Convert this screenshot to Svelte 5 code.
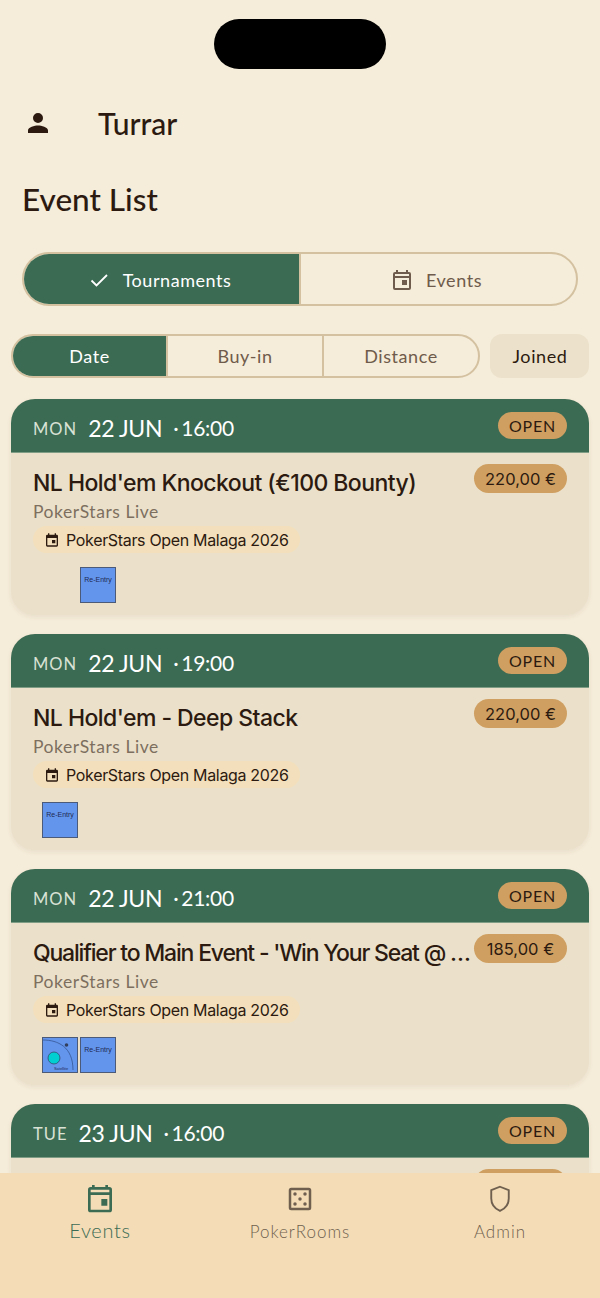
<script>
  const cards = [
    { day: 'MON', date: '22 JUN', time: '16:00', title: "NL Hold'em Knockout (€100 Bounty)", price: '220,00 €', tags: ['spacer', 'reentry'] },
    { day: 'MON', date: '22 JUN', time: '19:00', title: "NL Hold'em - Deep Stack", price: '220,00 €', tags: ['reentry'] },
    { day: 'MON', date: '22 JUN', time: '21:00', title: "Qualifier to Main Event - 'Win Your Seat @ Main Event'", price: '185,00 €', tags: ['satellite', 'reentry'], tight: true },
    { day: 'TUE', date: '23 JUN', time: '16:00', title: "NL Hold'em Freezeout", price: '220,00 €', tags: ['reentry'] }
  ];
</script>

<div class="page">
  <div class="notch"></div>

  <header class="user">
    <svg class="user-icon" viewBox="0 0 24 24" width="30" height="30"><path fill="#2c1a10" d="M12 12a4 4 0 1 0 0-8 4 4 0 0 0 0 8zm0 2c-2.67 0-8 1.34-8 4v2h16v-2c0-2.66-5.33-4-8-4z"/></svg>
    <span class="user-name">Turrar</span>
  </header>

  <h1>Event List</h1>

  <div class="seg seg-main">
    <div class="seg-item active">
      <svg viewBox="0 0 24 24" width="24" height="24"><path fill="none" stroke="#fff" stroke-width="1.8" d="M4.5 12.5l5 5L20 7"/></svg>
      <span>Tournaments</span>
    </div>
    <div class="seg-item">
      <svg viewBox="0 0 24 24" width="24" height="24"><path fill="#6f5b4b" d="M19 4h-1V2h-2v2H8V2H6v2H5a2 2 0 0 0-2 2v14a2 2 0 0 0 2 2h14a2 2 0 0 0 2-2V6a2 2 0 0 0-2-2zm0 16H5V10h14v10zM5 8V6h14v2H5zm7 4h5v5h-5v-5z"/></svg>
      <span>Events</span>
    </div>
  </div>

  <div class="filters">
    <div class="seg seg-sort">
      <div class="seg-item active">Date</div>
      <div class="seg-item">Buy-in</div>
      <div class="seg-item">Distance</div>
    </div>
    <div class="joined">Joined</div>
  </div>

  <div class="list">
    {#each cards as c}
      <article class="card">
        <div class="card-head">
          <span class="day">{c.day}</span>
          <span class="date">{c.date}</span>
          <span class="time"><span class="dot">·</span>{c.time}</span>
          <span class="open">OPEN</span>
        </div>
        <div class="card-body">
          <div class="title-row">
            <div class="title" class:tight={c.tight}>{c.title}</div>
            <div class="price">{c.price}</div>
          </div>
          <div class="venue">PokerStars Live</div>
          <div class="series">
            <svg viewBox="0 0 24 24" width="16" height="16"><path fill="#2c1a10" d="M19 4h-1V2h-2v2H8V2H6v2H5a2 2 0 0 0-2 2v14a2 2 0 0 0 2 2h14a2 2 0 0 0 2-2V6a2 2 0 0 0-2-2zm0 16H5V9h14v11zm-7-8h5v5h-5v-5z"/></svg>
            <span>PokerStars Open Malaga 2026</span>
          </div>
          <div class="tags">
            {#each c.tags as t}
              {#if t === 'spacer'}
                <div class="tag-spacer"></div>
              {:else if t === 'reentry'}
                <div class="tag"><span>Re-Entry</span></div>
              {:else}
                <div class="tag sat">
                  <svg viewBox="0 0 36 36" width="36" height="36">
                    <path d="M1 3C16 3 31 10 31 33" fill="none" stroke="#2f4f86" stroke-width="0.7"/>
                    <circle cx="24.500" cy="8" r="1.800" fill="#333f5c"/>
                    <circle cx="12" cy="21" r="6" fill="#00ced1" stroke="#333f5c" stroke-width="0.7"/>
                    <text x="19" y="32.500" text-anchor="middle" class="sat-text">Satellite</text>
                  </svg>
                </div>
              {/if}
            {/each}
          </div>
        </div>
      </article>
    {/each}
  </div>

  <nav class="bottom">
    <div class="nav-item current">
      <svg viewBox="0 0 24 24" width="32" height="32"><path fill="#3c6b54" d="M19 3h-1V1.500h-2V3H8V1.500H6V3H5a2 2 0 0 0-2 2v15a2 2 0 0 0 2 2h14a2 2 0 0 0 2-2V5a2 2 0 0 0-2-2zm0 17H5V9h14v11zM5 7V5h14v2H5zm8 5h4.500v5H13v-5z"/></svg>
      <span>Events</span>
    </div>
    <div class="nav-item">
      <svg viewBox="0 0 24 24" width="30" height="30"><path fill="#6f5f4e" d="M19 3H5a2 2 0 0 0-2 2v14a2 2 0 0 0 2 2h14a2 2 0 0 0 2-2V5a2 2 0 0 0-2-2zm0 16H5V5h14v14z"/><circle cx="8" cy="8" r="1.400" fill="#6f5f4e"/><circle cx="16" cy="8" r="1.400" fill="#6f5f4e"/><circle cx="12" cy="12" r="1.400" fill="#6f5f4e"/><circle cx="8" cy="16" r="1.400" fill="#6f5f4e"/><circle cx="16" cy="16" r="1.400" fill="#6f5f4e"/></svg>
      <span>PokerRooms</span>
    </div>
    <div class="nav-item">
      <svg viewBox="0 0 24 24" width="30" height="30"><path fill="none" stroke="#6f5f4e" stroke-width="1.500" d="M12 2.200l7 2.800v6.500c0 4.500-3 8.200-7 10-4-1.800-7-5.500-7-10V5z"/></svg>
      <span>Admin</span>
    </div>
  </nav>
</div>

<style>
  :global(body) { margin: 0; background: #f5ecd9; }
  .page {
    position: relative; width: 600px; height: 1298px; overflow: hidden;
    background: #f5ecd9; color: #2c1a10;
    font-family: "Inter", "Liberation Sans", sans-serif;
    padding-top: 99px; box-sizing: border-box;
  }
  .notch { position: absolute; left: 214px; top: 19px; width: 172px; height: 50px; border-radius: 25px; background: #000; }
  .user { display: flex; align-items: center; height: 48px; padding-left: 23px; gap: 45px; }
  .user-icon { flex: none; }
  .user-name { font-size: 30px; line-height: 48px; font-family: "Lato", sans-serif; font-weight: 500; }
  h1 { margin: 0; padding: 28px 0 1px 22px; font-size: 31.500px; line-height: 48px; font-weight: 500; font-family: "Lato", sans-serif; }

  .seg { display: flex; border: 2px solid #d3c1a0; box-sizing: border-box; overflow: hidden; background: #f5ecd9; }
  .seg-item { flex: 1 1 0; box-sizing: border-box; display: flex; align-items: center; justify-content: center; gap: 12px; color: #6f5b4b; font-family: "Lato", sans-serif; font-size: 18px; letter-spacing: 0.550px; }
  .seg-item + .seg-item { border-left: 2px solid #d3c1a0; }
  .seg-item.active { background: #3c6b54; color: #fff; }
  .seg-main { margin: 28px 22px 0 22px; height: 54px; border-radius: 27px; }
  .seg-main .seg-item { padding: 2px 5px 0 0; }
  .seg-main .seg-item.active { flex: 0 0 275px; padding-right: 5px; }
  .filters { display: flex; align-items: center; gap: 10px; margin: 28px 11px 0 11px; }
  .seg-sort { width: 469px; height: 44px; border-radius: 22px; }
  .seg-sort .seg-item.active { flex: 0 0 153px; }
  .joined { flex: 1; height: 44px; border-radius: 12px; background: #ece2cb; display: flex; align-items: center; justify-content: center; font-family: "Lato", sans-serif; font-size: 18px; letter-spacing: 0.600px; color: #2c1a10; padding-left: 1px; }

  .list { display: flex; flex-direction: column; gap: 19px; margin: 21px 11px 0; }
  .card { height: 216px; border-radius: 24px; overflow: hidden; background: #ebe1ca; box-shadow: 0 2px 5px rgba(90, 70, 40, 0.08); flex: none; }
  .card-head { height: 54px; background: #3c6b54; color: #fff; display: flex; align-items: center; padding: 4px 22px 0; box-sizing: border-box; border-bottom: 1px solid #7f9c84; }
  .day { font-family: "Lato", sans-serif; font-size: 16.500px; letter-spacing: 1px; color: #d9e2d5; margin-right: 11px; position: relative; top: 1px; }
  .date { font-family: "Lato", sans-serif; font-size: 23px; letter-spacing: -0.350px; }
  .time { font-family: "Lato", sans-serif; font-size: 21px; letter-spacing: -0.300px; margin-left: 11px; }
  .dot { margin-right: 3px; }
  .open { margin-left: auto; background: #cf9f61; color: #2c1a10; border-radius: 14px; width: 69px; height: 27px; display: flex; align-items: center; justify-content: center; font-family: "Lato", sans-serif; font-size: 16px; letter-spacing: 0.800px; position: relative; top: -2px; }
  .card-body { padding: 13px 22px 0; }
  .title-row { display: flex; align-items: flex-start; height: 34px; }
  .title { flex: 1; min-width: 0; white-space: nowrap; overflow: hidden; text-overflow: ellipsis; font-size: 23px; line-height: 34px; font-weight: 500; letter-spacing: -0.550px; font-family: "Inter", sans-serif; padding-right: 2px; }
  .title.tight { letter-spacing: -1.200px; }
  .price { flex: none; margin-top: -2px; background: #cf9f61; border-radius: 15px; height: 29px; width: 93px; justify-content: center; display: flex; align-items: center; font-size: 16.500px; font-family: "Inter", sans-serif; }
  .venue { font-family: "Lato", sans-serif; font-size: 17.500px; line-height: 24px; letter-spacing: 0.550px; color: #7d6f5f; }
  .series { display: inline-flex; align-items: center; gap: 6px; height: 27px; border-radius: 14px; background: #f3dfbb; padding: 0 11px; margin-top: 2px; font-size: 16px; letter-spacing: -0.330px; font-family: "Inter", sans-serif; }
  .tags { display: flex; gap: 2px; margin-top: 14px; padding-left: 9px; }
  .tag-spacer { width: 36px; height: 36px; }
  .tag { width: 36px; height: 36px; box-sizing: border-box; background: #6495ed; border: 1px solid #4a5a78; text-align: center; overflow: hidden; color: #1e2c52; }
  .tag span { display: block; font-family: "Liberation Sans", sans-serif; font-size: 7px; line-height: 9px; padding-top: 7px; white-space: nowrap; margin: 0 -2px; }
  .sat svg { display: block; margin: -1px; }
  .sat-text { font-family: "Liberation Sans", sans-serif; font-size: 4px; fill: #1e2c52; }

  .bottom { position: absolute; left: 0; right: 0; bottom: 0; height: 125px; background: #f3dcb6; display: flex; }
  .nav-item { flex: 1; display: flex; flex-direction: column; align-items: center; padding-top: 10px; box-sizing: border-box; font-family: "Lato", sans-serif; font-size: 17px; font-weight: 300; letter-spacing: 1px; color: #6f5f4e; gap: 6px; }
  .nav-item svg { height: 32px; }
  .current { color: #3c6b54; font-size: 20px; gap: 3px; letter-spacing: 0.700px; }
</style>
